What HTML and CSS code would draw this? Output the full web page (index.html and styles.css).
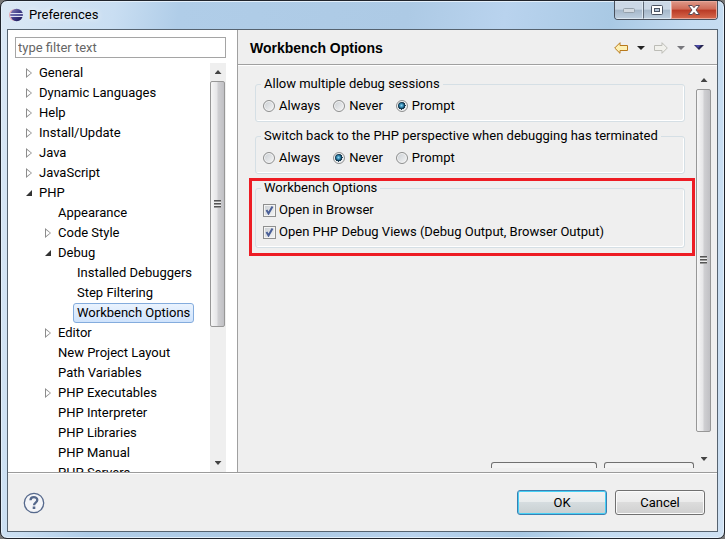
FILE: index.html
```html
<!DOCTYPE html>
<html lang="en">
<head>
<meta charset="utf-8">
<title>Preferences</title>
<link rel="stylesheet" href="styles.css">
</head>
<body>
<div class="window">
  <header class="titlebar">
    <svg class="logo" viewBox="0 0 14 14" aria-hidden="true">
      <defs><linearGradient id="orb" x1="0" x2="1" y1="0" y2="1"><stop offset="0" stop-color="#8a84b8"/><stop offset=".5" stop-color="#3d3a86"/><stop offset="1" stop-color="#16124e"/></linearGradient></defs>
      <circle cx="6" cy="7" r="6" fill="#e3a9b4"/>
      <circle cx="7.700" cy="7" r="6.200" fill="url(#orb)"/>
      <path d="M1 5.500h13M1 8.500h13" stroke="#dfe2f4"/>
      <path d="M1 7h13" stroke="#7b7fbb"/>
    </svg>
    <h1>Preferences</h1>
    <div class="captions">
      <button class="cap" aria-label="Minimize"><svg viewBox="0 0 12 5" width="12" height="5"><rect x=".5" y=".5" width="11" height="4" rx="1" fill="#d3dae1" stroke="#94a0ab"/></svg></button>
      <button class="cap" aria-label="Maximize"><svg viewBox="0 0 12 10" width="12" height="10"><rect x=".5" y=".5" width="11" height="9" rx="1" fill="#fff" stroke="#4a5362"/><rect x="3.500" y="3.500" width="5" height="3" fill="#b5c5d8" stroke="#4a5362"/></svg></button>
      <button class="cap close" aria-label="Close"><svg viewBox="0 0 12 10" width="12" height="10"><path d="M.5.5h3.700L6 2.700 7.800.5h3.700L8 5l3.500 4.500H7.800L6 7.300 4.200 9.500H.5L4 5z" fill="#fff" stroke="#5a4a55"/></svg></button>
    </div>
  </header>
  <div class="client">
    <div class="main">
      <nav class="side">
        <input class="filter" type="text" placeholder="type filter text" aria-label="Filter">
        <div class="tree-area">
          <ul class="tree">
            <li class="shut">General</li>
            <li class="shut">Dynamic Languages</li>
            <li class="shut">Help</li>
            <li class="shut">Install/Update</li>
            <li class="shut">Java</li>
            <li class="shut">JavaScript</li>
            <li class="open">PHP</li>
            <li class="l2">Appearance</li>
            <li class="l2 shut">Code Style</li>
            <li class="l2 open">Debug</li>
            <li class="l3">Installed Debuggers</li>
            <li class="l3">Step Filtering</li>
            <li class="l3"><span class="selected">Workbench Options</span></li>
            <li class="l2 shut">Editor</li>
            <li class="l2">New Project Layout</li>
            <li class="l2">Path Variables</li>
            <li class="l2 shut">PHP Executables</li>
            <li class="l2">PHP Interpreter</li>
            <li class="l2">PHP Libraries</li>
            <li class="l2">PHP Manual</li>
            <li class="l2">PHP Servers</li>
          </ul>
          <div class="scroll tree-scroll"><i class="up"></i><div class="track"><div class="thumb"><i class="grip"></i></div></div><i class="down"></i></div>
        </div>
      </nav>
      <section class="page">
        <div class="page-head">
          <h2>Workbench Options</h2>
          <div class="tools">
            <button aria-label="Back"><svg width="14" height="12" viewBox="0 0 14 12"><path d="M.7 6 6 .7V3.500h7.500v5H6v2.800z" fill="#fdf0b4" stroke="#b8791c"/></svg></button>
            <button aria-label="Back history"><svg width="8" height="4" viewBox="0 0 8 4"><path d="M0 0h8L4 4z" fill="#222"/></svg></button>
            <button aria-label="Forward"><svg width="14" height="12" viewBox="0 0 14 12"><path d="M13.300 6 8 .7V3.500H.5v5H8v2.800z" fill="#f1f1ec" stroke="#bcbcb6"/></svg></button>
            <button aria-label="Forward history"><svg width="8" height="4" viewBox="0 0 8 4"><path d="M0 0h8L4 4z" fill="#77777c"/></svg></button>
            <button aria-label="Menu"><svg width="10" height="5" viewBox="0 0 10 5"><path d="M0 0h10L5 5z" fill="#25254f"/><path d="M1 0h6L4 3z" fill="#4a48a8"/></svg></button>
          </div>
        </div>
        <div class="page-body">
          <div class="content">
            <fieldset>
              <legend>Allow multiple debug sessions</legend>
              <div class="radios">
                <label><input type="radio" name="multi">Always</label>
                <label><input type="radio" name="multi">Never</label>
                <label><input type="radio" name="multi" checked>Prompt</label>
              </div>
            </fieldset>
            <fieldset>
              <legend>Switch back to the PHP perspective when debugging has terminated</legend>
              <div class="radios">
                <label><input type="radio" name="back">Always</label>
                <label><input type="radio" name="back" checked>Never</label>
                <label><input type="radio" name="back">Prompt</label>
              </div>
            </fieldset>
            <div class="highlight">
              <fieldset>
                <legend>Workbench Options</legend>
                <div class="checks">
                  <label><input type="checkbox" checked>Open in Browser</label>
                  <label><input type="checkbox" checked>Open PHP Debug Views (Debug Output, Browser Output)</label>
                </div>
              </fieldset>
            </div>
            <div class="cut-buttons"><span class="wide"></span><span></span></div>
          </div>
          <div class="scroll page-scroll"><i class="up"></i><div class="track"><div class="thumb"><i class="grip"></i></div></div><i class="down"></i></div>
        </div>
      </section>
    </div>
    <footer class="foot">
      <button class="help" aria-label="Help"><svg width="22" height="22" viewBox="0 0 22 22"><circle cx="11" cy="11" r="9.700" fill="#f4f5f8" stroke="#56698c" stroke-width="1.300"/><path d="M7.500 8.300C7.500 4 14.300 4.300 14.300 8c0 2.600-3.300 2.500-3.300 5.300" fill="none" stroke="#56698c" stroke-width="2.300"/><rect x="9.700" y="14.500" width="2.600" height="2.500" fill="#56698c"/></svg></button>
      <button class="btn default">OK</button>
      <button class="btn">Cancel</button>
    </footer>
  </div>
</div>
</body>
</html>
```
FILE: styles.css
```css
* { box-sizing: border-box; }
body {
  margin: 0;
  background: #777;
  color: #000;
  font: 13px/20px Roboto, "Open Sans", sans-serif;
}
h1, h2, ul { margin: 0; padding: 0; font: inherit; }
button, input { font: inherit; color: inherit; margin: 0; }
svg { display: block; }

.window {
  display: flex;
  flex-direction: column;
  height: 100vh;
  padding: 0 6px 6px;
  border: 1px solid #20242c;
  border-radius: 7px;
  box-shadow: inset 0 0 0 1px #e3effa;
  background: linear-gradient(100deg, #dbe8f5 0, #c9def2 14%, #b0cde8 22%, #adcae5 50%, #b9d3ee 62%, #a9c9e4 75%, #c3dbf1 85%, #cfe1f3 100%);
}

.titlebar {
  display: flex;
  flex: none;
  align-items: center;
  height: 28px;
  padding-left: 2px;
}
.logo { width: 14px; height: 14px; margin-right: 6px; }
.titlebar h1 { flex: 1; text-shadow: 0 0 6px #fff; }
.captions {
  display: flex;
  align-self: flex-start;
  border: 1px solid #48505c;
  border-top: 0;
  border-radius: 0 0 4px 4px;
  overflow: hidden;
}
.cap {
  display: grid;
  place-items: center;
  width: 28px;
  height: 18px;
  padding: 0;
  border: 1px solid #dce7f1;
  border-width: 1px 1px 1px 0;
  background: linear-gradient(#cbd8e6 45%, #a5b7c9 50%, #bccddd);
}
.cap + .cap { border-left: 1px solid #5e6976; }
.cap.close {
  width: 46px;
  border-color: #e9a89a;
  background: linear-gradient(#dc9484 0, #cf6a56 45%, #b93a25 50%, #d4664a);
}

.client {
  display: flex;
  flex: 1;
  flex-direction: column;
  min-height: 0;
  border: 1px solid #566370;
  background: #efefef;
}
.main {
  display: grid;
  grid-template-columns: 229px 1fr;
  flex: 1;
  min-height: 0;
  border-bottom: 1px solid #9b9b9b;
}
.side {
  display: flex;
  flex-direction: column;
  min-height: 0;
  padding: 7px 11px 0 7px;
  background: #fff;
}
.filter {
  flex: none;
  width: 100%;
  height: 21px;
  margin-bottom: 5px;
  padding: 0 2px;
  border: 1px solid #a5a5a5;
  outline: 0;
  background: #fff;
}
.filter::placeholder { color: #666; opacity: 1; }
.tree-area { display: flex; flex: 1; min-height: 0; }
.tree { flex: 1; overflow: hidden; list-style: none; white-space: nowrap; }
.tree li {
  display: flex;
  align-items: center;
  height: 20px;
  padding-left: 11px;
}
.tree li::before { content: ""; flex: none; width: 6px; height: 10px; margin-right: 7px; }
.tree .shut::before {
  background: #8c8c8c;
  clip-path: polygon(evenodd, 0 0, 6px 5px, 0 10px, 0 0, 1px 2px, 1px 8px, 5px 5px, 1px 2px);
}
.tree .open::before {
  height: 6px;
  background: #333;
  clip-path: polygon(100% 0, 100% 100%, 0 100%);
}
.tree .l2 { padding-left: 30px; }
.tree .l3 { padding-left: 49px; }
.selected {
  margin-left: -4px;
  padding: 0 3px;
  border: 1px solid #84acdd;
  border-radius: 3px;
  background: linear-gradient(#eaf3fe, #cfe3fc);
  line-height: 18px;
}

.scroll { display: flex; flex: none; flex-direction: column; width: 16px; background: #efefef; }
.up, .down { display: grid; place-items: center; flex: none; height: 18px; }
.up::before, .down::before {
  content: "";
  width: 7px;
  height: 4px;
  background: #444;
  clip-path: polygon(50% 0, 100% 100%, 0 100%);
}
.down::before { clip-path: polygon(0 0, 100% 0, 50% 100%); }
.track { flex: 1; min-height: 0; }
.thumb {
  display: grid;
  place-items: center;
  width: 15px;
  height: 66%;
  border: 1px solid #979797;
  border-radius: 2px;
  background: linear-gradient(90deg, #f6f6f6, #e6e6e8 45%, #cfcfd2 55%, #c0c0c4);
}
.page-scroll .thumb { height: 95%; }
.grip {
  width: 7px;
  height: 8px;
  background: repeating-linear-gradient(#555 0 1px, #999 1px 2px, #eee 2px 3px);
}

.page {
  display: flex;
  flex-direction: column;
  min-width: 0;
  min-height: 0;
  border-left: 1px solid #a0a0a0;
}
.page-head {
  display: flex;
  flex: none;
  align-items: center;
  justify-content: space-between;
  height: 35px;
  padding: 1px 13px 0 12px;
  border-bottom: 1px solid #a0a0a0;
  box-shadow: 0 1px #fff;
}
.page-head h2 { font: bold 14px/20px "Liberation Sans", Arial, sans-serif; }
.tools { display: flex; align-items: center; gap: 9px; }
.tools button { padding: 0; border: 0; background: none; }
.page-body { display: flex; flex: 1; min-height: 0; padding: 6px 5px 4px 11px; }
.content {
  display: flex;
  flex: 1;
  flex-direction: column;
  min-width: 0;
  padding-top: 6px;
  overflow: hidden;
}
fieldset {
  min-width: 0;
  margin: 0 11px 7px 6px;
  padding: 5px 7px;
  border: 1px solid #d5dfe5;
  border-radius: 3px;
  box-shadow: inset -1px -1px #fff;
}
legend {
  height: 14px;
  margin-left: -2px;
  padding: 0 3px;
  line-height: 14px;
  white-space: nowrap;
}
.radios { display: flex; gap: 13px; }
label { display: flex; align-items: center; gap: 4px; height: 20px; }
.checks { display: grid; gap: 2px; }
.checks label { gap: 3px; }
input[type="radio"], input[type="checkbox"] {
  flex: none;
  appearance: none;
  width: 12px;
  height: 12px;
  border: 1px solid #8e8f8f;
  background: linear-gradient(135deg, #c9ced3, #f6f6f6);
  box-shadow: inset 0 0 0 1px #f4f4f4;
}
input[type="radio"] { border-radius: 50%; }
input[type="radio"]:checked {
  background: radial-gradient(circle at 45% 45%, #8fd8f5 0, #2b7fa8 2px, #14384f 3px, #14384f 4px, #e4e8eb 4px);
}
input[type="checkbox"] { width: 13px; height: 13px; }
input[type="checkbox"]:checked {
  background: url("data:image/svg+xml,%3Csvg xmlns='http://www.w3.org/2000/svg' viewBox='0 0 11 11'%3E%3Cpath d='M2.500 5 4.500 8.500 8.500 1.500' fill='none' stroke='%234a5f97' stroke-width='2'/%3E%3C/svg%3E") center / 11px 11px no-repeat, linear-gradient(135deg, #c9ced3, #f6f6f6);
}
.highlight { margin: -3px 1px 0 0; border: 3px solid #ed1c24; }
.highlight fieldset { margin: 0 7px 5px 3px; }
.cut-buttons { display: flex; justify-content: flex-end; gap: 7px; margin-top: auto; padding-right: 2px; }
.cut-buttons span {
  width: 90px;
  height: 6px;
  border: 1px solid #707070;
  border-bottom: 0;
  border-radius: 3px 3px 0 0;
  background: #f3f3f3;
}
.cut-buttons .wide { width: 106px; }

.foot {
  display: flex;
  flex: none;
  align-items: center;
  gap: 8px;
  height: 58px;
  padding: 0 12px 0 15px;
  border-top: 1px solid #fff;
}
.help { margin-right: auto; padding: 0; border: 0; background: none; }
.btn {
  width: 90px;
  height: 25px;
  padding: 0;
  border: 1px solid #707070;
  border-radius: 3px;
  box-shadow: inset 0 0 0 1px #fbfbfb;
  background: linear-gradient(#f2f2f2 0, #ebebeb 48%, #dcdcdc 50%, #cfcfcf);
  line-height: 20px;
}
.btn.default {
  border-color: #3c7fb1;
  box-shadow: inset 0 0 0 1px #46d0f5;
  background: linear-gradient(#f2f2f2 0, #e8eced 48%, #d5dcdf 50%, #c8cfd1);
}
```
